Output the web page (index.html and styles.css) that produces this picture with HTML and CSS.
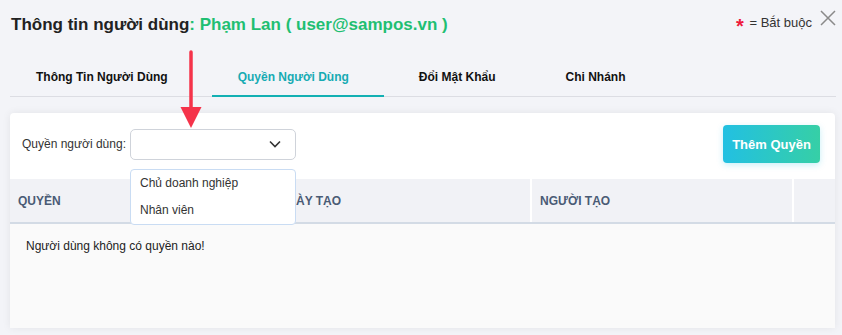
FILE: index.html
```html
<!DOCTYPE html>
<html lang="vi">
<head>
  <meta charset="UTF-8">
  <title>Thông tin người dùng</title>
  <link rel="stylesheet" href="styles.css">
</head>
<body>

<div class="modal-head">
  <h3 class="title">Thông tin người dùng<span class="user">: Phạm Lan ( user@sampos.vn )</span></h3>
  <div class="required"><span class="star">*</span> = Bắt buộc</div>
  <span class="close">
    <svg width="16" height="16" viewBox="0 0 16 16"><path d="M1 1L15 15M15 1L1 15" stroke="#8a8a8a" stroke-width="1.5" fill="none"/></svg>
  </span>
</div>

<div class="tabs">
  <div class="tab">Thông Tin Người Dùng</div>
  <div class="tab active">Quyền Người Dùng</div>
  <div class="tab">Đổi Mật Khẩu</div>
  <div class="tab">Chi Nhánh</div>
</div>

<div class="card">
  <div class="filter">
    <label>Quyền người dùng:</label>
    <div class="select-wrap">
      <div class="select">
        <svg width="12" height="8" viewBox="0 0 12 8"><path d="M1 1.5L6 6.5L11 1.5" stroke="#333" stroke-width="1.6" fill="none"/></svg>
      </div>
      <div class="dropdown">
        <div class="option">Chủ doanh nghiệp</div>
        <div class="option">Nhân viên</div>
      </div>
    </div>
    <button class="add-btn">Thêm Quyền</button>
  </div>

  <div class="table">
    <div class="thead">
      <div class="th c1">QUYỀN</div>
      <div class="th c2">NGÀY TẠO</div>
      <div class="th c3">NGƯỜI TẠO</div>
      <div class="th c4"></div>
    </div>
    <div class="tbody">
      <p>Người dùng không có quyền nào!</p>
    </div>
  </div>
</div>

<!-- mũi tên chú thích -->
<svg class="pointer" width="24" height="82" viewBox="0 0 24 82">
  <path d="M12 2V62" stroke="#f5334a" stroke-width="3.5" stroke-linecap="round"/>
  <path d="M1.5 57H22.5L12 78Z" fill="#f5334a"/>
</svg>

</body>
</html>
```

FILE: styles.css
```css
body {
  margin: 0;
  background: #f3f4f8;
  font-family: "Liberation Sans", Arial, sans-serif;
  color: #222;
  position: relative;
  height: 335px;
  overflow: hidden;
}
.modal-head {
  height: 50px;
  display: flex;
  align-items: center;
  padding: 0 6px 0 11px;
}
.title {
  margin: 0;
  font-size: 17px;
  font-weight: bold;
  color: #222;
  flex: 1;
}
.title .user {
  color: #1fbf72;
}
.required {
  font-size: 13px;
  color: #333;
  margin-right: 8px;
  padding-top: 2px;
}
.star {
  color: #ee1a3c;
  font-size: 20px;
  font-weight: bold;
  vertical-align: -6px;
  margin-right: 2px;
}
.close {
  align-self: flex-start;
  margin-top: 10px;
  width: 16px;
  height: 16px;
}
.tabs {
  display: flex;
  margin: 7px 6px 0 10px;
  border-bottom: 1px solid #dcdde3;
}
.tab {
  font-size: 12px;
  font-weight: bold;
  color: #111;
  line-height: 16px;
  padding: 12px 35px 10px 26px;
  border-bottom: 2px solid transparent;
  margin-bottom: -1px;
}
.tab + .tab {
  margin-left: 9px;
}
.tab.active {
  color: #17abb3;
  border-bottom-color: #13b0b3;
}
.card {
  margin: 16px 7px 0 10px;
  background: #fff;
  border-radius: 4px 4px 0 0;
  box-shadow: 0 0 8px rgba(0,0,0,0.07);
}
.filter {
  display: flex;
  align-items: center;
  padding: 12px 15px 16px 12px;
}
.filter label {
  font-size: 12px;
  color: #333;
  margin-right: 4px;
}
.select-wrap {
  position: relative;
  flex: 1;
}
.select {
  width: 166px;
  height: 31px;
  border: 1px solid #cfd3da;
  border-radius: 5px;
  display: flex;
  align-items: center;
  justify-content: flex-end;
  padding-right: 14px;
  box-sizing: border-box;
}
.dropdown {
  position: absolute;
  top: 40px;
  left: 0;
  width: 166px;
  box-sizing: border-box;
  background: #fff;
  border: 1px solid #c9dcf3;
  border-radius: 4px;
  z-index: 2;
}
.option {
  font-size: 12px;
  color: #333;
  line-height: 27px;
  padding-left: 9px;
}
.add-btn {
  height: 38px;
  padding: 0;
  width: 97px;
  border: none;
  border-radius: 4px;
  background: linear-gradient(90deg, #22c0e2, #36cfa6);
  color: #fff;
  font-family: inherit;
  font-size: 13px;
  font-weight: bold;
  box-shadow: 0 2px 6px rgba(34,192,226,0.25);
}
.thead {
  display: flex;
  background: #f1f2f6;
  border-bottom: 2px solid #d3dbe5;
  height: 43px;
}
.th {
  font-size: 12px;
  font-weight: bold;
  color: #4a5b75;
  display: flex;
  align-items: center;
  padding-left: 8px;
  box-sizing: border-box;
}
.th + .th {
  border-left: 2px solid #fff;
}
.c1 { width: 258px; }
.c2 { width: 262px; }
.c3 { width: 262px; }
.c4 { flex: 1; }
.tbody {
  background: #fafafa;
  height: 104px;
  padding: 15px 16px 0;
  box-sizing: border-box;
}
.tbody p {
  margin: 0;
  font-size: 12px;
  color: #222;
}
.pointer {
  position: absolute;
  left: 179px;
  top: 50px;
  z-index: 5;
}
```
